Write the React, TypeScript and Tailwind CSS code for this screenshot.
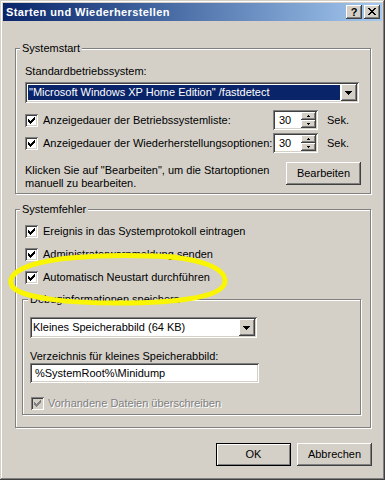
import React from "react";

const SUNKEN =
  "shadow-[inset_1px_1px_0_#808080,inset_-1px_-1px_0_#ffffff,inset_2px_2px_0_#404040,inset_-2px_-2px_0_#d4d0c8]";
const RAISED =
  "shadow-[inset_-1px_-1px_0_#404040,inset_1px_1px_0_#ffffff,inset_-2px_-2px_0_#808080]";

function CheckBox({ disabled }: { disabled?: boolean }) {
  return (
    <div
      className={`relative w-[13px] h-[13px] shrink-0 ${
        disabled ? "bg-[#d4d0c8]" : "bg-white"
      } shadow-[inset_1px_1px_0_#808080,inset_-1px_-1px_0_#ffffff,inset_2px_2px_0_#404040,inset_-2px_-2px_0_#d4d0c8]`}
    >
      <svg
        width="13"
        height="13"
        viewBox="0 0 13 13"
        shapeRendering="crispEdges"
        className="absolute left-0 top-0"
      >
        <path
          d="M9 3h1v1h-1z M8 4h2v1h-2z M3 5h1v1h-1z M7 5h3v1h-3z M3 6h2v1h-2z M6 6h3v1h-3z M3 7h5v1h-5z M4 8h3v1h-3z M5 9h1v1h-1z"
          fill={disabled ? "#808080" : "#000000"}
        />
      </svg>
    </div>
  );
}

function DropButton() {
  return (
    <div className={`relative w-[16px] h-[17px] shrink-0 bg-[#d4d0c8] ${RAISED}`}>
      <svg width="16" height="17" viewBox="0 0 16 17" shapeRendering="crispEdges" className="absolute left-0 top-0">
        <path d="M4 7h7v1h-7z M5 8h5v1h-5z M6 9h3v1h-3z M7 10h1v1h-1z" fill="#000" />
      </svg>
    </div>
  );
}

function Spin({ value }: { value: string }) {
  return (
    <div className={`w-[45px] h-[20px] bg-white p-[2px] flex shrink-0 ${SUNKEN}`}>
      <div className="flex-1 pl-[4px] leading-[16px]">{value}</div>
      <div className="w-[15px] flex flex-col">
        <div className={`relative h-[8px] bg-[#d4d0c8] ${RAISED}`}>
          <svg width="15" height="8" viewBox="0 0 15 8" shapeRendering="crispEdges" className="absolute left-0 top-0">
            <path d="M7 3h1v1h-1z M6 4h3v1h-3z" fill="#000" />
          </svg>
        </div>
        <div className={`relative h-[8px] bg-[#d4d0c8] ${RAISED}`}>
          <svg width="15" height="8" viewBox="0 0 15 8" shapeRendering="crispEdges" className="absolute left-0 top-0">
            <path d="M6 3h3v1h-3z M7 4h1v1h-1z" fill="#000" />
          </svg>
        </div>
      </div>
    </div>
  );
}

function Button({ children, isDefault }: { children: React.ReactNode; isDefault?: boolean }) {
  if (isDefault) {
    return (
      <div className="w-[75px] h-[23px] border border-black bg-[#d4d0c8] shadow-[inset_1px_1px_0_#ffffff,inset_-1px_-1px_0_#808080] flex items-center justify-center">
        {children}
      </div>
    );
  }
  return (
    <div className={`w-[75px] h-[23px] bg-[#d4d0c8] flex items-center justify-center ${RAISED}`}>
      {children}
    </div>
  );
}

function Group({
  label,
  className,
  legendClass,
  children,
}: {
  label: string;
  className: string;
  legendClass: string;
  children: React.ReactNode;
}) {
  return (
    <div
      className={`relative border border-[#808080] shadow-[1px_1px_0_#ffffff,inset_1px_1px_0_#ffffff] ${className}`}
    >
      <span className={`absolute top-[-7px] px-[2px] bg-[#d4d0c8] leading-[13px] whitespace-nowrap ${legendClass}`}>
        {label}
      </span>
      {children}
    </div>
  );
}

export default function App() {
  return (
    <div className="relative w-[385px] h-[480px] overflow-hidden bg-[#d4d0c8] pt-[3px] text-black text-[11px] leading-[13px] font-['Liberation_Sans',Arial,sans-serif] shadow-[inset_-1px_-1px_0_#404040,inset_1px_1px_0_#d4d0c8,inset_-2px_-2px_0_#808080,inset_2px_2px_0_#ffffff]">
      {/* Title bar */}
      <div className="mx-[3px] h-[18px] bg-linear-to-r from-[#0a246a] to-[#a6caf0] flex items-center pl-[3px] pr-[2px]">
        <div className="flex-1 text-white font-bold text-[11px] leading-[13px] tracking-[0.4px]">Starten und Wiederherstellen</div>
        <div className="flex gap-[2px]">
          <div className={`relative w-[16px] h-[14px] bg-[#d4d0c8] ${RAISED} flex items-center justify-center`}>
            <span className="font-bold text-[11px] leading-[11px] text-black">?</span>
          </div>
          <div className={`relative w-[16px] h-[14px] bg-[#d4d0c8] ${RAISED}`}>
            <svg width="16" height="14" viewBox="0 0 16 14" shapeRendering="crispEdges" className="absolute left-0 top-0">
              <path
                d="M4 3h2v1h-2z M10 3h2v1h-2z M5 4h2v1h-2z M9 4h2v1h-2z M6 5h4v1h-4z M7 6h2v1h-2z M6 7h4v1h-4z M5 8h2v1h-2z M9 8h2v1h-2z M4 9h2v1h-2z M10 9h2v1h-2z"
                fill="#000"
              />
            </svg>
          </div>
        </div>
      </div>

      {/* Systemstart */}
      <Group label="Systemstart" className="ml-[15px] mt-[27px] w-[356px] h-[146px] pl-[9px] pr-[9px] pt-[16px]" legendClass="left-[4px]">
        <div>Standardbetriebssystem:</div>
        <div className={`mt-[4px] w-[334px] h-[21px] bg-white p-[2px] flex ${SUNKEN}`}>
          <div className="flex-1 p-[1px]">
            <div className="h-full bg-[#0a246a] text-white pl-[1px] leading-[15px] whitespace-nowrap">
              "Microsoft Windows XP Home Edition" /fastdetect
            </div>
          </div>
          <DropButton />
        </div>
        <div className="mt-[7px] h-[20px] flex items-center">
          <CheckBox />
          <span className="ml-[5px] w-[230px] whitespace-nowrap">Anzeigedauer der Betriebssystemliste:</span>
          <Spin value="30" />
          <span className="ml-[9px]">Sek.</span>
        </div>
        <div className="mt-[3px] h-[20px] flex items-center">
          <CheckBox />
          <span className="ml-[5px] w-[230px] whitespace-nowrap">Anzeigedauer der Wiederherstellungsoptionen:</span>
          <Spin value="30" />
          <span className="ml-[9px]">Sek.</span>
        </div>
        <div className="mt-[9px] flex justify-between items-start">
          <div className="mt-[2px] whitespace-nowrap">
            Klicken Sie auf "Bearbeiten", um die Startoptionen
            <br />
            manuell zu bearbeiten.
          </div>
          <Button>Bearbeiten</Button>
        </div>
      </Group>

      {/* Systemfehler */}
      <Group label="Systemfehler" className="ml-[15px] mt-[15px] w-[356px] h-[219px] pl-[6px] pt-[15px]" legendClass="left-[4px]">
        <div className="pl-[3px] h-[13px] flex items-center">
          <CheckBox />
          <span className="ml-[5px] whitespace-nowrap">Ereignis in das Systemprotokoll eintragen</span>
        </div>
        <div className="mt-[10px] pl-[3px] h-[13px] flex items-center">
          <CheckBox />
          <span className="ml-[5px] whitespace-nowrap">Administratorwarnmeldung senden</span>
        </div>
        <div className="mt-[10px] pl-[3px] h-[13px] flex items-center">
          <CheckBox />
          <span className="ml-[5px] whitespace-nowrap">Automatisch Neustart durchführen</span>
        </div>

        <Group
          label="Debuginformationen speichern"
          className="mt-[15px] w-[339px] h-[116px] pl-[7px] pt-[17px]"
          legendClass="left-[5px]"
        >
          <div className={`w-[227px] h-[21px] bg-white p-[2px] flex ${SUNKEN}`}>
            <div className="flex-1 pl-[1px] leading-[17px] whitespace-nowrap">Kleines Speicherabbild (64 KB)</div>
            <DropButton />
          </div>
          <div className="mt-[12px] whitespace-nowrap">Verzeichnis für kleines Speicherabbild:</div>
          <div className={`w-[229px] h-[20px] bg-white p-[2px] pl-[5px] leading-[16px] whitespace-nowrap ${SUNKEN}`}>
            %SystemRoot%\Minidump
          </div>
          <div className="mt-[14px] pl-[1px] h-[13px] flex items-center">
            <CheckBox disabled />
            <span className="ml-[4px] whitespace-nowrap text-[#808080] [text-shadow:1px_1px_0_#ffffff]">
              Vorhandene Dateien überschreiben
            </span>
          </div>
        </Group>
      </Group>

      {/* Buttons */}
      <div className="mt-[15px] flex justify-end gap-[6px] pr-[13px]">
        <Button isDefault>OK</Button>
        <Button>Abbrechen</Button>
      </div>

      {/* Yellow annotation */}
      <svg
        width="385"
        height="480"
        viewBox="0 0 385 480"
        className="absolute left-0 top-0 pointer-events-none"
      >
        <path
          d="M150 256 C200 257, 225 268, 225 281 C225 295, 190 302, 130 303 C70 304, 20 298, 12 286 C5 272, 30 262, 70 258 C100 255, 140 255, 175 257"
          fill="none"
          stroke="#faf500"
          strokeWidth="5"
          strokeLinecap="round"
          strokeLinejoin="round"
        />
      </svg>
    </div>
  );
}
